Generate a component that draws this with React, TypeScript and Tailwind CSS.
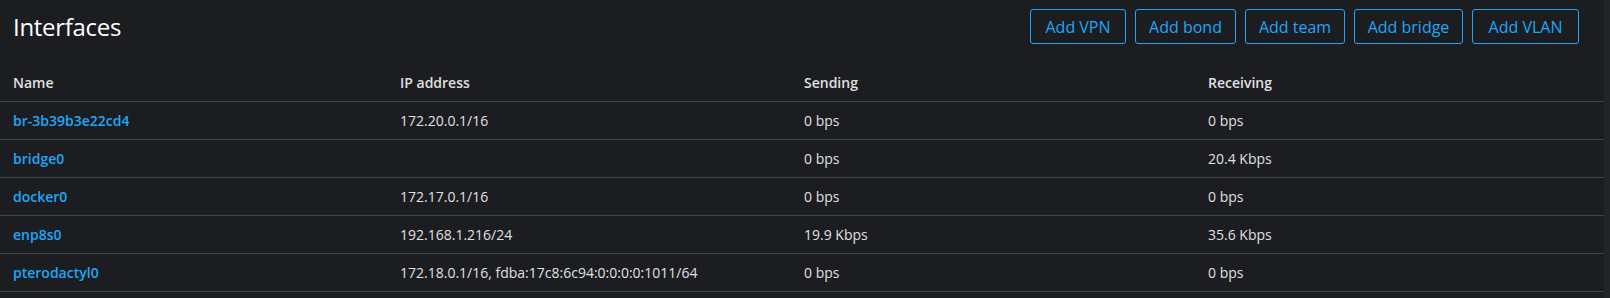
import React from "react";

const rows = [
  { name: "br-3b39b3e22cd4", ip: "172.20.0.1/16", send: "0 bps", recv: "0 bps" },
  { name: "bridge0", ip: "", send: "0 bps", recv: "20.4 Kbps" },
  { name: "docker0", ip: "172.17.0.1/16", send: "0 bps", recv: "0 bps" },
  { name: "enp8s0", ip: "192.168.1.216/24", send: "19.9 Kbps", recv: "35.6 Kbps" },
  { name: "pterodactyl0", ip: "172.18.0.1/16, fdba:17c8:6c94:0:0:0:0:1011/64", send: "0 bps", recv: "0 bps" },
];

const buttons = [
  { label: "Add VPN", w: "w-[96px]" },
  { label: "Add bond", w: "w-[101px]" },
  { label: "Add team", w: "w-[100px]" },
  { label: "Add bridge", w: "w-[109px]" },
  { label: "Add VLAN", w: "w-[107px]" },
];

export default function App() {
  return (
    <div
      className="flex w-[1610px] h-[298px] bg-[#1b1d21] text-[#e0e0e0] overflow-hidden"
      style={{ fontFamily: '"Open Sans", "Noto Sans", sans-serif' }}
    >
      <div className="w-[1604px] flex flex-col">
        <div className="flex items-center justify-between h-[53px] pl-[13px] pr-[25px]">
          <h1 className="text-[24px] leading-none text-white font-medium tracking-[-0.3px]">Interfaces</h1>
          <div className="flex gap-[9px]">
            {buttons.map((b) => (
              <button
                key={b.label}
                className={`${b.w} h-[35px] rounded-[3px] border border-[#1fa7f8] text-[#1fa7f8] text-[16px] flex items-center justify-center`}
              >
                {b.label}
              </button>
            ))}
          </div>
        </div>
        <div className="grid grid-cols-[400px_404px_404px_1fr] h-[49px] items-end border-b border-[#444548] text-[14px] font-semibold pb-[8px] leading-[21px]">
          <div className="pl-[13px]">Name</div>
          <div>IP address</div>
          <div>Sending</div>
          <div>Receiving</div>
        </div>
        {rows.map((r) => (
          <div
            key={r.name}
            className="grid grid-cols-[400px_404px_404px_1fr] h-[38px] items-center border-b border-[#444548] text-[14px] leading-[21px]"
          >
            <div className="pl-[13px] text-[#1fa7f8] font-semibold">{r.name}</div>
            <div>{r.ip}</div>
            <div>{r.send}</div>
            <div>{r.recv}</div>
          </div>
        ))}
      </div>
      <div className="flex-1 bg-[#222428]" />
    </div>
  );
}
